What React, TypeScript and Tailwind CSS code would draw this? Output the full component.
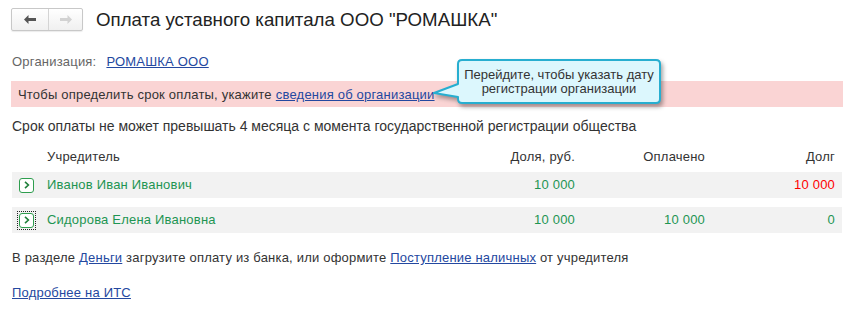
import React from 'react'

const font = { fontFamily: '"Liberation Sans", Arial, sans-serif' }

interface Founder {
  name: string
  share: string
  paid: string
  debt: string
  debtRed: boolean
  focused: boolean
}

const founders: Founder[] = [
  { name: 'Иванов Иван Иванович', share: '10 000', paid: '', debt: '10 000', debtRed: true, focused: false },
  { name: 'Сидорова Елена Ивановна', share: '10 000', paid: '10 000', debt: '0', debtRed: false, focused: true },
]

function NavButtons() {
  return (
    <div className="flex h-[23px] w-[72px] rounded-[2px] border border-[#c8c8c8] bg-gradient-to-b from-white to-[#f0f0f0] shadow-[0_1px_1px_rgba(0,0,0,0.08)]">
      <div className="flex w-[37px] items-center justify-center border-r border-[#d4d4d4]">
        <svg width="12" height="9" viewBox="0 0 12 9">
          <path d="M0 4.5 L4.5 0 L4.5 3 L12 3 L12 6 L4.5 6 L4.5 9 Z" fill="#555" />
        </svg>
      </div>
      <div className="flex flex-1 items-center justify-center">
        <svg width="12" height="9" viewBox="0 0 12 9">
          <path d="M12 4.5 L7.5 0 L7.5 3 L0 3 L0 6 L7.5 6 L7.5 9 Z" fill="#d2d2d2" />
        </svg>
      </div>
    </div>
  )
}

function ExpandIcon({ focused }: { focused: boolean }) {
  return (
    <div className={`flex h-[19px] w-[19px] items-center justify-center ${focused ? 'outline outline-1 outline-dotted outline-[#222] -outline-offset-1' : ''}`}>
      <div className="flex h-[15px] w-[15px] items-center justify-center rounded-[3px] border border-[#2f9e4f] bg-white">
        <svg width="6" height="8" viewBox="0 0 6 8">
          <path d="M1 0.8 L4.4 4 L1 7.2" stroke="#1f7f3a" strokeWidth="1.6" fill="none" />
        </svg>
      </div>
    </div>
  )
}

function Callout() {
  return (
    <div className="absolute left-[433px] top-[57px] h-[52px] w-[236px]">
      <svg width="236" height="52" viewBox="0 0 236 52" className="absolute left-0 top-0 drop-shadow-[2px_3px_2px_rgba(0,0,0,0.35)]">
        <path
          d="M29 3 L223 3 Q227 3 227 7 L227 42 Q227 46 223 46 L29 46 Q25 46 25 42 L25 40 L1 36 L25 27 L25 7 Q25 3 29 3 Z"
          fill="#dcf7fd"
          stroke="#27aed0"
          strokeWidth="2"
          strokeLinejoin="round"
        />
      </svg>
      <div className="absolute left-[25px] top-[3px] flex h-[43px] w-[202px] flex-col items-center justify-center text-center text-[13px] leading-[14px] tracking-normal text-[#333]">
        <span>Перейдите, чтобы указать дату</span>
        <span>регистрации организации</span>
      </div>
    </div>
  )
}

export default function App() {
  return (
    <div className="relative h-[314px] w-[854px] overflow-hidden bg-white text-[13px] tracking-[0.2px] text-[#333]" style={font}>
      {/* Header */}
      <div className="flex items-center pl-[11px] pt-[8px]">
        <NavButtons />
        <h1 className="ml-[13px] text-[18.7px] leading-[23px] tracking-normal text-[#222]">Оплата уставного капитала ООО "РОМАШКА"</h1>
      </div>

      {/* Organization */}
      <div className="mt-[21px] flex h-[20px] items-center pl-[12px]">
        <span className="text-[#666]">Организация:</span>
        <a className="ml-[10px] text-[#2448a0] underline decoration-[#2448a0]">РОМАШКА ООО</a>
      </div>

      {/* Warning */}
      <div className="ml-[11px] mt-[9px] flex h-[26px] w-[832px] items-center bg-[#fad4d4] pl-[7px] pt-[2px]">
        <span>Чтобы определить срок оплаты, укажите</span>
        <a className="ml-[4px] text-[#2448a0] underline">сведения об организации</a>
      </div>

      <div className="mt-[9px] flex h-[20px] items-center pl-[12px] text-[14px] tracking-normal">
        Срок оплаты не может превышать 4 месяца с момента государственной регистрации общества
      </div>

      {/* Table */}
      <div className="ml-[12px] mt-[11px] w-[830px]">
        <div className="grid h-[20px] grid-cols-[35px_1fr_100px_130px_130px] items-center pr-[7px]">
          <div />
          <div>Учредитель</div>
          <div className="text-right">Доля, руб.</div>
          <div className="text-right">Оплачено</div>
          <div className="text-right">Долг</div>
        </div>
        <div className="mt-[5px] flex flex-col gap-[9px]">
          {founders.map((f) => (
            <div key={f.name} className="grid h-[26px] grid-cols-[35px_1fr_100px_130px_130px] items-center bg-[#f2f2f2] pr-[7px] text-[#1e9552]">
              <div className="pl-[5px]">
                <ExpandIcon focused={f.focused} />
              </div>
              <div>{f.name}</div>
              <div className="text-right">{f.share}</div>
              <div className="text-right">{f.paid}</div>
              <div className={`text-right ${f.debtRed ? 'text-[#ff0000]' : ''}`}>{f.debt}</div>
            </div>
          ))}
        </div>
      </div>

      {/* Footer */}
      <div className="mt-[15px] flex h-[20px] items-center pl-[12px]">
        <span>В разделе&nbsp;</span>
        <a className="text-[#2448a0] underline">Деньги</a>
        <span>&nbsp;загрузите оплату из банка, или оформите&nbsp;</span>
        <a className="text-[#2448a0] underline">Поступление наличных</a>
        <span>&nbsp;от учредителя</span>
      </div>
      <div className="mt-[15px] flex h-[20px] items-center pl-[12px]">
        <a className="text-[#2448a0] underline">Подробнее на ИТС</a>
      </div>

      <Callout />
    </div>
  )
}
